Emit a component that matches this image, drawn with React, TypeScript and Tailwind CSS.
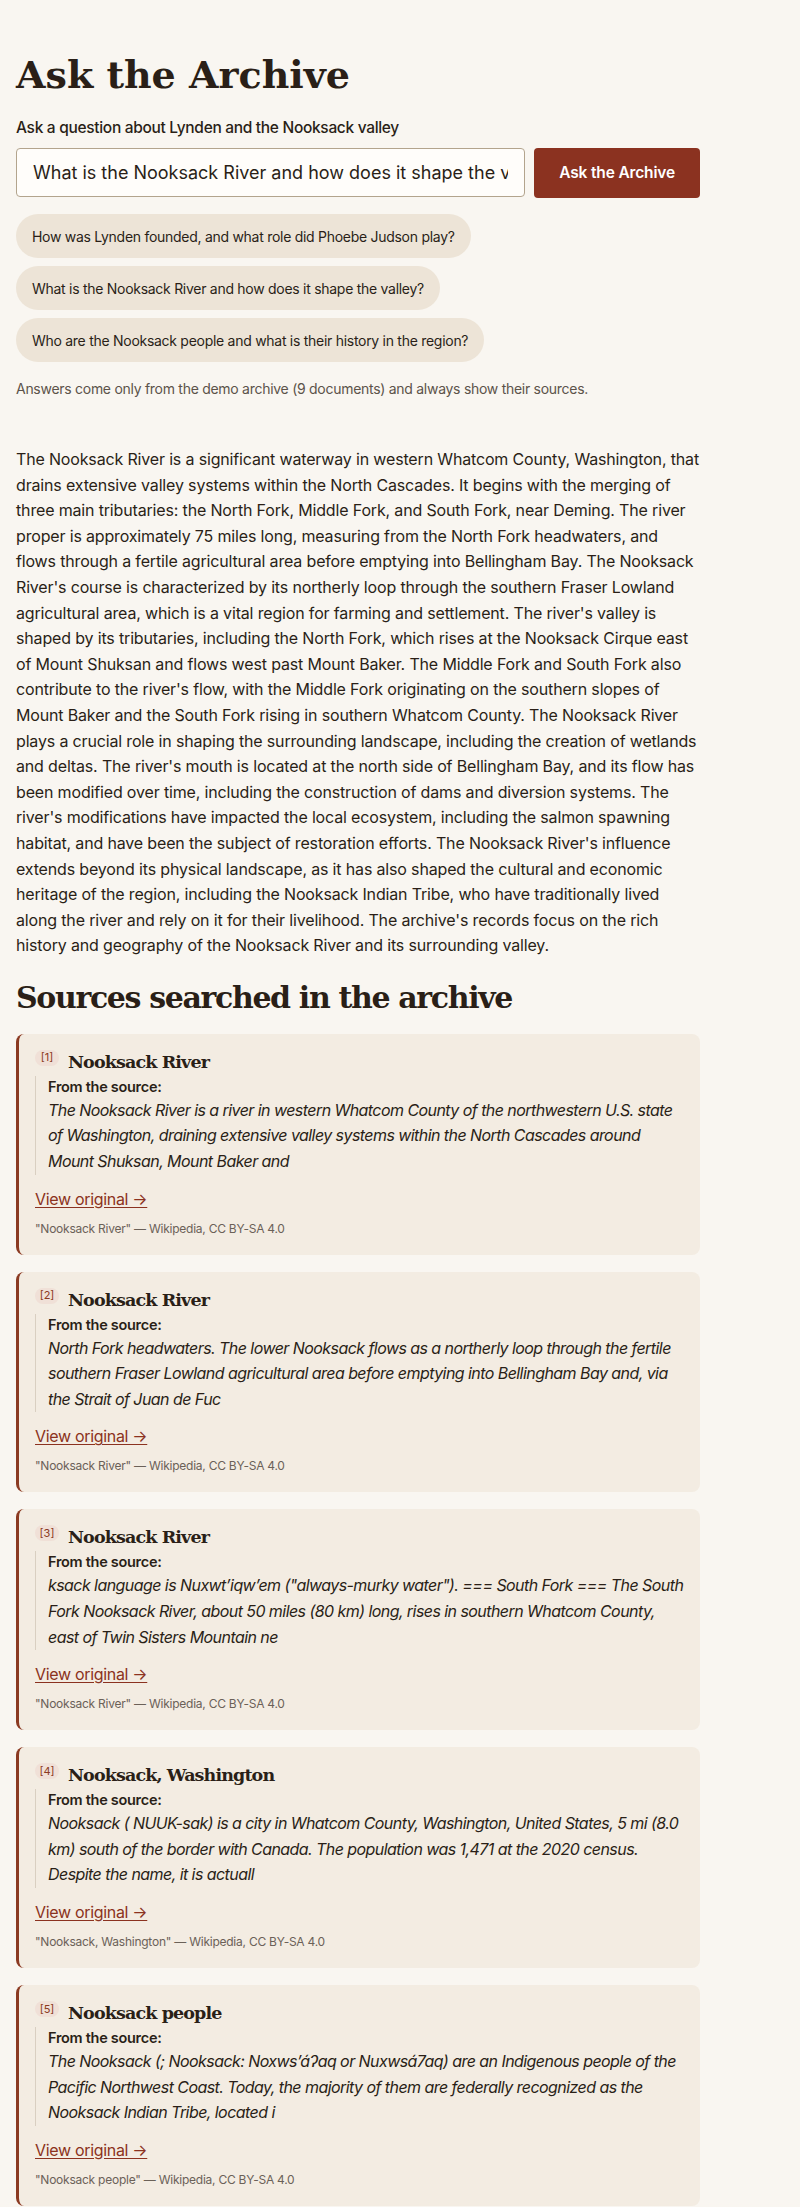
import { useState } from 'react';

type Source = {
  id: number;
  title: string;
  excerpt: string;
  credit: string;
};

const SUGGESTIONS = [
  'How was Lynden founded, and what role did Phoebe Judson play?',
  'What is the Nooksack River and how does it shape the valley?',
  'Who are the Nooksack people and what is their history in the region?',
];

const ANSWER =
  "The Nooksack River is a significant waterway in western Whatcom County, Washington, that drains extensive valley systems within the North Cascades. It begins with the merging of three main tributaries: the North Fork, Middle Fork, and South Fork, near Deming. The river proper is approximately 75 miles long, measuring from the North Fork headwaters, and flows through a fertile agricultural area before emptying into Bellingham Bay. The Nooksack River's course is characterized by its northerly loop through the southern Fraser Lowland agricultural area, which is a vital region for farming and settlement. The river's valley is shaped by its tributaries, including the North Fork, which rises at the Nooksack Cirque east of Mount Shuksan and flows west past Mount Baker. The Middle Fork and South Fork also contribute to the river's flow, with the Middle Fork originating on the southern slopes of Mount Baker and the South Fork rising in southern Whatcom County. The Nooksack River plays a crucial role in shaping the surrounding landscape, including the creation of wetlands and deltas. The river's mouth is located at the north side of Bellingham Bay, and its flow has been modified over time, including the construction of dams and diversion systems. The river's modifications have impacted the local ecosystem, including the salmon spawning habitat, and have been the subject of restoration efforts. The Nooksack River's influence extends beyond its physical landscape, as it has also shaped the cultural and economic heritage of the region, including the Nooksack Indian Tribe, who have traditionally lived along the river and rely on it for their livelihood. The archive's records focus on the rich history and geography of the Nooksack River and its surrounding valley.";

const SOURCES: Source[] = [
  {
    id: 1,
    title: 'Nooksack River',
    excerpt:
      'The Nooksack River is a river in western Whatcom County of the northwestern U.S. state of Washington, draining extensive valley systems within the North Cascades around Mount Shuksan, Mount Baker and',
    credit: '"Nooksack River" — Wikipedia, CC BY-SA 4.0',
  },
  {
    id: 2,
    title: 'Nooksack River',
    excerpt:
      'North Fork headwaters. The lower Nooksack flows as a northerly loop through the fertile southern Fraser Lowland agricultural area before emptying into Bellingham Bay and, via the Strait of Juan de Fuc',
    credit: '"Nooksack River" — Wikipedia, CC BY-SA 4.0',
  },
  {
    id: 3,
    title: 'Nooksack River',
    excerpt:
      'ksack language is Nuxwt\u2019iqw\u2019em ("always-murky water"). === South Fork === The South Fork Nooksack River, about 50 miles (80 km) long, rises in southern Whatcom County, east of Twin Sisters Mountain ne',
    credit: '"Nooksack River" — Wikipedia, CC BY-SA 4.0',
  },
  {
    id: 4,
    title: 'Nooksack, Washington',
    excerpt:
      'Nooksack ( NUUK-sak) is a city in Whatcom County, Washington, United States, 5 mi (8.0 km) south of the border with Canada. The population was 1,471 at the 2020 census. Despite the name, it is actuall',
    credit: '"Nooksack, Washington" — Wikipedia, CC BY-SA 4.0',
  },
  {
    id: 5,
    title: 'Nooksack people',
    excerpt:
      'The Nooksack (; Nooksack: Noxws\u02bc\u00e1\u0294aq or Nuxws\u00e17aq) are an Indigenous people of the Pacific Northwest Coast. Today, the majority of them are federally recognized as the Nooksack Indian Tribe, located i',
    credit: '"Nooksack people" — Wikipedia, CC BY-SA 4.0',
  },
];

const serif = "font-['DejaVu_Serif',serif]";

function SourceCard({ source }: { source: Source }) {
  return (
    <article className="mb-[17px] rounded-lg border-l-[3px] border-[#8b3a22] bg-[#f3ece2] px-4 pt-4 pb-4">
      <div className="flex items-start gap-[9px]">
        <span className="inline-flex h-4 w-6 items-center justify-center rounded-full bg-[#f0e0d7] text-[11px] leading-none text-[#8b3a22]">
          [{source.id}]
        </span>
        <h3 className={`${serif} text-[17.5px] leading-6 font-bold tracking-[-0.05em] text-[#2a1f17]`}>
          {source.title}
        </h3>
      </div>
      <blockquote className="mt-[2px] border-l border-[#d9cfc1] pl-3">
        <p className="text-[14.5px] leading-[22px] font-semibold tracking-[-0.02em] text-[#2a1f17]">
          From the source:
        </p>
        <p className="text-[16px] leading-[25.6px] italic tracking-[-0.035em] text-[#2a1f17]">{source.excerpt}</p>
      </blockquote>
      <a
        href="#"
        className="mt-3 inline-block text-[16px] leading-6 tracking-[-0.02em] text-[#8b3220] underline underline-offset-2"
      >
        View original →
      </a>
      <p className="mt-2 text-[12px] leading-5 tracking-[-0.02em] text-[#6b6158]">{source.credit}</p>
    </article>
  );
}

export default function App() {
  const [question, setQuestion] = useState(SUGGESTIONS[1]);

  return (
    <div className="min-h-screen bg-[#f9f6f1] font-['Inter',sans-serif] text-[#2a1f17]">
      <main className="max-w-[716px] px-4 pt-[53px] pb-10">
        <h1 className={`${serif} text-[38px] leading-[44px] font-bold text-[#2a1f17]`}>Ask the Archive</h1>

        <label className="mt-5 block text-[15.5px] leading-[22px] font-medium tracking-[-0.02em]">
          Ask a question about Lynden and the Nooksack valley
        </label>

        <form className="mt-[9px] flex gap-[9px]" onSubmit={(e) => e.preventDefault()}>
          <input
            value={question}
            onChange={(e) => setQuestion(e.target.value)}
            className="h-[49px] w-[510px] rounded border border-[#b3a48d] bg-[#fffdfa] px-4 text-[18px] text-[#2a1f17] outline-none"
          />
          <button
            type="submit"
            className="h-[50px] w-[166px] rounded bg-[#8b3220] text-[15.5px] font-semibold tracking-[-0.01em] text-white"
          >
            Ask the Archive
          </button>
        </form>

        <div className="mt-4 flex flex-col items-start gap-2">
          {SUGGESTIONS.map((s) => (
            <button
              key={s}
              onClick={() => setQuestion(s)}
              className="h-11 rounded-full bg-[#ede4d7] px-4 text-[14px] tracking-[-0.02em] text-[#2a1f17]"
            >
              {s}
            </button>
          ))}
        </div>

        <p className="mt-[17px] text-[14px] leading-5 tracking-[-0.02em] text-[#5c534a]">
          Answers come only from the demo archive (9 documents) and always show their sources.
        </p>

        <section className="mt-12">
          <p className="text-[16px] leading-[25.6px] tracking-[-0.01em]">{ANSWER}</p>

          <h2 className={`${serif} mt-[19px] text-[30px] leading-[40px] font-bold tracking-[-0.045em]`}>
            Sources searched in the archive
          </h2>

          <div className="mt-4">
            {SOURCES.map((s) => (
              <SourceCard key={s.id} source={s} />
            ))}
          </div>
        </section>
      </main>
    </div>
  );
}
